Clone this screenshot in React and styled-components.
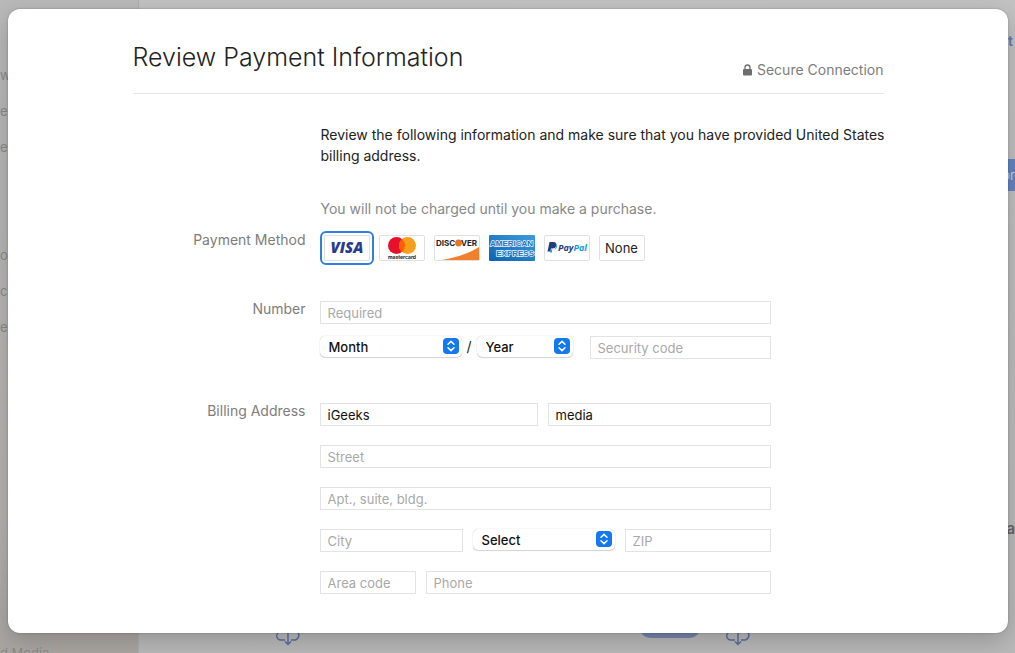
import React, { useState } from "react";
import styled, { createGlobalStyle } from "styled-components";

const GlobalStyle = createGlobalStyle`
  * {
    box-sizing: border-box;
  }

  body {
    margin: 0;
    background: #b2b2b2;
    font-family: Inter, "Liberation Sans", sans-serif;
    font-size: 14px;
    color: #222;
  }

  input, select, button {
    font-family: inherit;
    font-size: 13px;
  }
`;

const cards = [
  { id: "visa", label: "Visa" },
  { id: "mastercard", label: "Mastercard" },
  { id: "discover", label: "Discover" },
  { id: "amex", label: "American Express" },
  { id: "paypal", label: "PayPal" },
  { id: "none", label: "None" },
];

const months = ["01", "02", "03", "04", "05", "06", "07", "08", "09", "10", "11", "12"];
const years = ["2024", "2025", "2026", "2027", "2028", "2029", "2030"];
const states = ["CA", "FL", "IL", "NY", "TX", "WA"];

const VisaLogo = () => (
  <svg width="44" height="24" viewBox="0 0 44 24" aria-hidden="true">
    <text x="22" y="17" textAnchor="middle" fontSize="15" fontWeight="800" fontStyle="italic" fontFamily="Open Sans, sans-serif" fill="#2a3a8c">VISA</text>
  </svg>
);

const MastercardLogo = () => (
  <svg width="44" height="24" viewBox="0 0 44 24" aria-hidden="true">
    <circle cx="16.5" cy="9.5" r="8.5" fill="#e8112d" />
    <circle cx="27.5" cy="9.5" r="8.5" fill="#f79e1b" />
    <path d="M22 3a8.500 8.500 0 0 1 0 13a8.500 8.500 0 0 1 0-13z" fill="#ff5f00" />
    <text x="22" y="23" textAnchor="middle" fontSize="5" fontWeight="700" fill="#222">mastercard</text>
  </svg>
);

const DiscoverLogo = () => (
  <svg width="44" height="24" viewBox="0 0 44 24" aria-hidden="true">
    <path d="M44 11v13H7C23 21 35 17 44 11z" fill="#f0802c" />
    <text x="1" y="10" fontSize="8" fontWeight="700" fill="#222">DISC</text>
    <circle cx="23.5" cy="7" r="3.4" fill="#ee7623" />
    <text x="26" y="10" fontSize="8" fontWeight="700" fill="#222">VER</text>
  </svg>
);

const AmexLogo = () => (
  <svg width="46" height="26" viewBox="0 0 46 26" aria-hidden="true">
    <defs>
      <linearGradient id="amex" x1="0" y1="1" x2="1" y2="0">
        <stop offset="0" stopColor="#0c62b0" />
        <stop offset="1" stopColor="#3f9bdc" />
      </linearGradient>
    </defs>
    <rect width="46" height="26" rx="1" fill="url(#amex)" />
    <g fontSize="8" fontWeight="700" fontFamily="Liberation Sans, sans-serif" fill="#1c74bf" stroke="#e8f4fd" strokeWidth="1.4" paintOrder="stroke">
      <text x="1" y="11">AMERICAN</text>
      <text x="45" y="21" textAnchor="end">EXPRESS</text>
    </g>
  </svg>
);

const PaypalLogo = () => (
  <svg width="44" height="24" viewBox="0 0 44 24" aria-hidden="true">
    <path d="M4.500 6h4c2.200 0 3.200 1.300 2.800 3.200c-.5 2.100-1.800 3.200-3.900 3.200H6L5.400 15.500H2.500z" fill="#253b80" />
    <path d="M11.500 8c.8.8.8 1.800.5 3c-.6 1.700-1.900 2.500-3.500 2.500H7.300L6.800 16.500H5l.5-3h2.200c2.200 0 3.600-1.700 3.800-5.500z" fill="#179bd7" />
    <text x="13" y="15" fontSize="9" fontWeight="700" fontStyle="italic" fontFamily="Open Sans, sans-serif">
      <tspan fill="#253b80">Pay</tspan><tspan fill="#179bd7">Pal</tspan>
    </text>
  </svg>
);

const logos = {
  visa: VisaLogo,
  mastercard: MastercardLogo,
  discover: DiscoverLogo,
  amex: AmexLogo,
  paypal: PaypalLogo,
};

const LockIcon = () => (
  <svg width="9" height="12" viewBox="0 0 9 12" aria-hidden="true">
    <path d="M2 6V3.500a2.500 2.500 0 0 1 5 0V6" fill="none" stroke="#6e6e6e" strokeWidth="1.300" />
    <rect y="5" width="9" height="6.500" rx="1" fill="#6e6e6e" />
  </svg>
);

const CloudIcon = () => (
  <svg width="24" height="22" viewBox="0 0 24 22" fill="none" stroke="#5b6f9f" strokeWidth="1.500" aria-hidden="true">
    <path d="M9 16H5a4 4 0 0 1-.5-8a6 6 0 0 1 11.500-1.500a4.800 4.800 0 0 1 3.500 9.500H15" />
    <path d="M12 9v11M9 17.500l3 3l3-3" />
  </svg>
);

const PopupSelect = ({ label, placeholder, options, width }) => (
  <SelectBox $width={width}>
    <select aria-label={label} defaultValue="">
      <option value="">{placeholder}</option>
      {options.map((option) => (
        <option key={option} value={option}>
          {option}
        </option>
      ))}
    </select>
    <Stepper>
      <svg width="16" height="16" viewBox="0 0 16 16" fill="none" stroke="#fff" strokeWidth="1.500" strokeLinecap="round" strokeLinejoin="round" aria-hidden="true">
        <path d="M5 6.300L8 3.400l3 2.900M5 9.700l3 2.900l3-2.900" />
      </svg>
    </Stepper>
  </SelectBox>
);

const App = () => {
  const [method, setMethod] = useState("visa");
  const [name, setName] = useState({ first: "iGeeks", last: "media" });

  const handleName = (e) => {
    setName((prev) => ({ ...prev, [e.target.name]: e.target.value }));
  };

  return (
    <Screen>
      <GlobalStyle />
      <Store aria-hidden="true">
        <Sidebar>
          <SidebarGroup>
            <span>w</span>
            <span>e</span>
            <span>e</span>
          </SidebarGroup>
          <SidebarGroup>
            <span>o</span>
            <span>c</span>
            <span>e</span>
          </SidebarGroup>
          <SidebarFoot>d Media</SidebarFoot>
        </Sidebar>
        <StoreMain>
          <StoreEdge>
            <EdgeLink>t</EdgeLink>
            <EdgeButton>or</EdgeButton>
            <EdgeTitle>na</EdgeTitle>
          </StoreEdge>
          <StoreFoot>
            <CloudIcon />
            <GetPill />
            <CloudIcon />
          </StoreFoot>
        </StoreMain>
      </Store>

      <Dialog role="dialog" aria-labelledby="title">
        <Content onSubmit={(e) => e.preventDefault()}>
          <Header>
            <h1 id="title">Review Payment Information</h1>
            <Secure>
              <LockIcon />
              Secure Connection
            </Secure>
          </Header>

          <Intro>
            <p>
              Review the following information and make sure that you have
              provided United States billing address.
            </p>
            <Note>You will not be charged until you make a purchase.</Note>
          </Intro>

          <Section>
            <SectionLabel id="method">Payment Method</SectionLabel>
            <CardList role="radiogroup" aria-labelledby="method">
              {cards.map(({ id, label }) => {
                const Logo = logos[id];
                return (
                  <Card key={id} $plain={id === "amex"}>
                    <input
                      type="radio"
                      name="method"
                      value={id}
                      aria-label={label}
                      checked={method === id}
                      onChange={(e) => setMethod(e.target.value)}
                    />
                    {Logo ? <Logo /> : label}
                  </Card>
                );
              })}
            </CardList>
          </Section>

          <Section $top={37}>
            <SectionLabel as="label" htmlFor="number">Number</SectionLabel>
            <Fields $gap={12}>
              <Field id="number" placeholder="Required" />
              <FieldRow>
                <PopupSelect label="Month" placeholder="Month" options={months} width={142} />
                <Slash>/</Slash>
                <PopupSelect label="Year" placeholder="Year" options={years} width={96} />
                <SecurityField placeholder="Security code" aria-label="Security code" />
              </FieldRow>
            </Fields>
          </Section>

          <Section $top={44}>
            <SectionLabel>Billing Address</SectionLabel>
            <Fields $gap={19}>
              <FieldRow $gap={10}>
                <Field name="first" aria-label="First name" value={name.first} onChange={handleName} $basis={218} />
                <Field name="last" aria-label="Last name" value={name.last} onChange={handleName} $basis={223} />
              </FieldRow>
              <Field placeholder="Street" aria-label="Street" />
              <Field placeholder="Apt., suite, bldg." aria-label="Apt., suite, bldg." />
              <FieldRow $gap={10}>
                <Field placeholder="City" aria-label="City" $basis={143} />
                <PopupSelect label="State" placeholder="Select" options={states} width={142} />
                <Field placeholder="ZIP" aria-label="ZIP" $basis={146} />
              </FieldRow>
              <FieldRow $gap={10}>
                <Field placeholder="Area code" aria-label="Area code" $basis={96} />
                <Field placeholder="Phone" aria-label="Phone" $basis={345} />
              </FieldRow>
            </Fields>
          </Section>
        </Content>
      </Dialog>
    </Screen>
  );
};

const Screen = styled.div`
  display: grid;
  min-height: 100vh;
  overflow: hidden;

  > * {
    grid-area: 1 / 1;
  }
`;

const Store = styled.div`
  display: flex;
  background: linear-gradient(#c2c2c2, #b9b9b9);
  font-size: 13px;
`;

const Sidebar = styled.div`
  display: flex;
  flex-direction: column;
  gap: 72px;
  width: 139px;
  padding-top: 57px;
  background: linear-gradient(#b9b9b9, #b5b3b2 80%, #aaa5a1);
  border-right: 1px solid #adadad;
  color: #8a8a8a;
`;

const SidebarGroup = styled.div`
  display: flex;
  flex-direction: column;

  span {
    line-height: 36px;
  }
`;

const SidebarFoot = styled.div`
  height: 8px;
  margin-top: auto;
  line-height: 16px;
`;

const StoreMain = styled.div`
  flex: 1;
  display: flex;
  flex-direction: column;
  justify-content: space-between;
`;

const StoreEdge = styled.div`
  display: flex;
  flex-direction: column;
  align-items: flex-end;
`;

const EdgeLink = styled.div`
  padding-right: 2px;
  margin-top: 32px;
  font-size: 14px;
  font-weight: 600;
  line-height: 17px;
  color: #6079b4;
`;

const EdgeButton = styled.div`
  margin-top: 110px;
  line-height: 32px;
  background: #6684c2;
  color: #c4cfe0;
`;

const EdgeTitle = styled.div`
  margin-top: 328px;
  font-size: 15px;
  font-weight: 600;
  line-height: 20px;
  color: #666;
`;

const StoreFoot = styled.div`
  display: flex;
  align-items: flex-end;
  padding: 0 265px 7px 137px;
`;

const GetPill = styled.div`
  width: 60px;
  height: 20px;
  margin: 0 26px 8px auto;
  border-radius: 10px;
  background: #7485ad;
`;

const Dialog = styled.div`
  margin: 9px 7px 20px 8px;
  padding: 0 32px 39px;
  border-radius: 12px;
  background: #fff;
  box-shadow: 0 0 2px rgba(0, 0, 0, 0.3), 0 8px 24px rgba(0, 0, 0, 0.2);
`;

const Content = styled.form`
  max-width: 751px;
  margin: 0 auto;
`;

const Header = styled.header`
  display: flex;
  justify-content: space-between;
  align-items: flex-end;
  padding: 31px 0 12px;
  border-bottom: 1px solid #e6e6e6;

  h1 {
    margin: 0 0 7px;
    font-size: 25px;
    font-weight: 300;
    line-height: 34px;
  }
`;

const Secure = styled.div`
  display: flex;
  align-items: center;
  gap: 5px;
  line-height: 22px;
  color: #7d7d7d;
`;

/* the intro may run slightly wider than the header rule */
const Intro = styled.div`
  margin-right: -16px;
  padding: 30px 0 13px 188px;

  p {
    margin: 0;
    line-height: 21px;
  }
`;

const Note = styled.p`
  color: #888;

  && {
    margin-top: 32px;
  }
`;

const Section = styled.section`
  display: grid;
  grid-template-columns: 173px minmax(0, 451px);
  column-gap: 14px;
  margin-top: ${(p) => p.$top || 0}px;
`;

const SectionLabel = styled.div`
  line-height: 16px;
  text-align: right;
  color: #7d7d7d;
`;

const CardList = styled.div`
  display: flex;
  gap: 9px;
  padding: 3px 4px;
`;

const Card = styled.label`
  position: relative;
  display: flex;
  align-items: center;
  justify-content: center;
  width: 46px;
  height: 26px;
  border: ${(p) => (p.$plain ? "none" : "1px solid #e0e0e0")};
  border-radius: 2px;
  font-size: 13px;
  cursor: pointer;

  input {
    position: absolute;
    opacity: 0;
  }

  &:has(input:checked) {
    outline: 2px solid #2f80dc;
    outline-offset: 2px;
  }
`;

const Fields = styled.div`
  display: flex;
  flex-direction: column;
  gap: ${(p) => p.$gap}px;
`;

const FieldRow = styled.div`
  display: flex;
  gap: ${(p) => p.$gap || 0}px;
`;

const Field = styled.input`
  flex: ${(p) => (p.$basis ? `${p.$basis} 1 ${p.$basis}px` : "none")};
  width: 100%;
  min-width: 0;
  height: 23px;
  padding: 1px 7px 0;
  border: 1px solid #e3e3e3;
  border-radius: 0;
  background: #fff;
  color: #111;

  &::placeholder {
    color: #a9a9a9;
    opacity: 1;
  }
`;

const SecurityField = styled(Field)`
  flex: 1;
  margin-left: 17px;
`;

const Slash = styled.span`
  width: 15px;
  line-height: 21px;
  text-align: center;
`;

const SelectBox = styled.div`
  position: relative;
  width: ${(p) => p.$width}px;
  height: 21px;

  select {
    width: 100%;
    height: 100%;
    padding: 0 24px 0 9px;
    border: none;
    border-radius: 5px;
    appearance: none;
    background: #fff;
    box-shadow: 0 0 1px rgba(0, 0, 0, 0.3), 0 1px 1px rgba(0, 0, 0, 0.15);
    font-weight: 500;
    color: #111;
  }
`;

const Stepper = styled.span`
  position: absolute;
  top: 2px;
  right: 3px;
  width: 16px;
  height: 16px;
  border-radius: 4px;
  background: #1478ee;
  pointer-events: none;
`;

export default App;
